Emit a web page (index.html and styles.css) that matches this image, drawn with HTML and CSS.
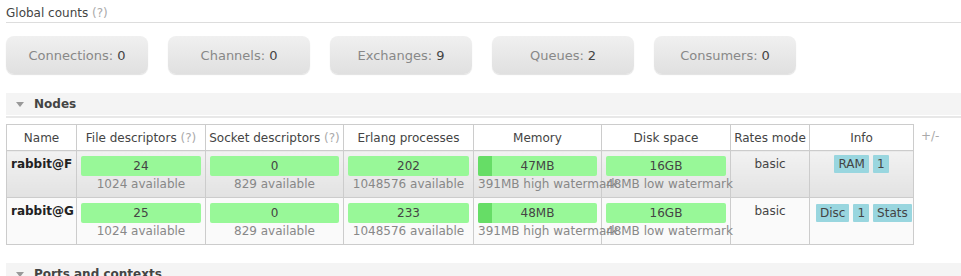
FILE: index.html
```html
<!doctype html>
<html lang="en">
    <head>
        <meta charset="utf-8">
        <title>Overview</title>
        <link rel="stylesheet" href="styles.css">
    </head>
    <body>
        <main>
            <h3 class="counts-title">Global counts <span class="help">(?)</span></h3>
            <div class="counts">
                <div class="count-box"><span class="label">Connections:</span> 0</div>
                <div class="count-box"><span class="label">Channels:</span> 0</div>
                <div class="count-box"><span class="label">Exchanges:</span> 9</div>
                <div class="count-box"><span class="label">Queues:</span> 2</div>
                <div class="count-box"><span class="label">Consumers:</span> 0</div>
            </div>

            <section class="section">
                <h2 class="section-head"><span class="arrow"></span>Nodes</h2>
                <div class="section-body">
                    <table class="list">
                        <colgroup>
                            <col style="width:70px">
                            <col style="width:129px">
                            <col style="width:138px">
                            <col style="width:130px">
                            <col style="width:128px">
                            <col style="width:129px">
                            <col style="width:79px">
                            <col style="width:104px">
                        </colgroup>
                        <thead>
                            <tr>
                                <th>Name</th>
                                <th>File descriptors <span class="help">(?)</span></th>
                                <th>Socket descriptors <span class="help">(?)</span></th>
                                <th>Erlang processes</th>
                                <th>Memory</th>
                                <th>Disk space</th>
                                <th>Rates mode</th>
                                <th>Info</th>
                            </tr>
                        </thead>
                        <tbody>
                            <tr class="alt1">
                                <td class="name">rabbit@F</td>
                                <td><div class="bar">24</div><div class="sub">1024 available</div></td>
                                <td><div class="bar">0</div><div class="sub">829 available</div></td>
                                <td><div class="bar">202</div><div class="sub">1048576 available</div></td>
                                <td><div class="bar"><span class="bar-main" style="width:12%"></span>47MB</div><div class="sub">391MB high watermark</div></td>
                                <td><div class="bar">16GB</div><div class="sub">48MB low watermark</div></td>
                                <td class="plain">basic</td>
                                <td class="plain"><span class="badge">RAM</span><span class="badge">1</span></td>
                            </tr>
                            <tr class="alt2">
                                <td class="name">rabbit@G</td>
                                <td><div class="bar">25</div><div class="sub">1024 available</div></td>
                                <td><div class="bar">0</div><div class="sub">829 available</div></td>
                                <td><div class="bar">233</div><div class="sub">1048576 available</div></td>
                                <td><div class="bar"><span class="bar-main" style="width:12%"></span>48MB</div><div class="sub">391MB high watermark</div></td>
                                <td><div class="bar">16GB</div><div class="sub">48MB low watermark</div></td>
                                <td class="plain">basic</td>
                                <td class="plain"><span class="badge">Disc</span><span class="badge">1</span><span class="badge">Stats</span></td>
                            </tr>
                        </tbody>
                    </table>
                    <span class="toggle">+/-</span>
                </div>
            </section>

            <section class="section">
                <h2 class="section-head"><span class="arrow"></span>Ports and contexts</h2>
            </section>
        </main>
    </body>
</html>
```

FILE: styles.css
```css
* {
    margin: 0;
    padding: 0;
    box-sizing: border-box;
}

body {
    font-family: "DejaVu Sans", Verdana, sans-serif;
    font-size: 12px;
    color: #444;
    background: #fff;
}

main {
    padding: 0 0 0 6px;
}

.help {
    color: #aaa;
    font-weight: normal;
}

.counts-title {
    font-weight: normal;
    font-size: 12px;
    line-height: 16px;
    padding: 5px 0 1px 0;
    border-bottom: 1px solid #ddd;
}

.counts {
    display: flex;
    gap: 20px;
    padding: 13px 0 19px 0;
}

.count-box {
    width: 142px;
    height: 38px;
    border-radius: 8px;
    background: linear-gradient(#f0f0f0, #e0e0e0);
    box-shadow: 0 1px 1px rgba(0,0,0,0.12);
    display: flex;
    align-items: center;
    justify-content: center;
    font-size: 13px;
    color: #444;
}

.count-box .label {
    color: #888;
    margin-right: 4px;
}

.section-head {
    font-size: 12px;
    font-weight: bold;
    color: #444;
    background: #f4f4f4;
    height: 23px;
    line-height: 23px;
    display: flex;
    align-items: center;
    border-bottom: 1px solid #fff;
    box-shadow: 0 2px 0 #e8e8e8;
}

.arrow {
    width: 0;
    height: 0;
    border-left: 4px solid transparent;
    border-right: 4px solid transparent;
    border-top: 5px solid #999;
    margin: 0 10px 0 10px;
}

.section-body {
    display: flex;
    align-items: flex-start;
    padding: 8px 0 18px 0;
}

.list {
    table-layout: fixed;
    width: 907px;
    border-collapse: collapse;
}

.list th {
    font-weight: normal;
    height: 26px;
    border: 1px solid #ccc;
    background: #fff;
    white-space: nowrap;
    overflow: hidden;
    color: #444;
}

.list td {
    border: 1px solid #ccc;
    vertical-align: top;
    text-align: center;
    padding: 5px 4px 5px 4px;
    white-space: nowrap;
}

.alt1 td {
    background: linear-gradient(#f2f2f2, #e2e2e2);
    height: 47px;
}

.alt2 td {
    background: #fafafa;
    height: 46px;
}

.list td.name {
    text-align: left;
    font-weight: bold;
    color: #222;
    padding: 6px 4px 0 4px;
}

.list td.plain {
    padding-top: 6px;
}

.bar {
    position: relative;
    height: 20px;
    line-height: 21px;
    background: #98f898;
    border-radius: 2px;
    color: #444;
    overflow: hidden;
}

.bar-main {
    position: absolute;
    left: 0;
    top: 0;
    bottom: 0;
    background: #66dd66;
}

.sub {
    color: #888;
    line-height: 16px;
}

.alt1 .plain .badge {
    margin-top: -2px;
}

.badge {
    display: inline-block;
    background: #99d6df;
    color: #444;
    padding: 0 4px;
    height: 18px;
    line-height: 18px;
    margin: 0 2px;
    border-radius: 1px;
}

.toggle {
    color: #aaa;
    margin: 5px 0 0 7px;
}
```
